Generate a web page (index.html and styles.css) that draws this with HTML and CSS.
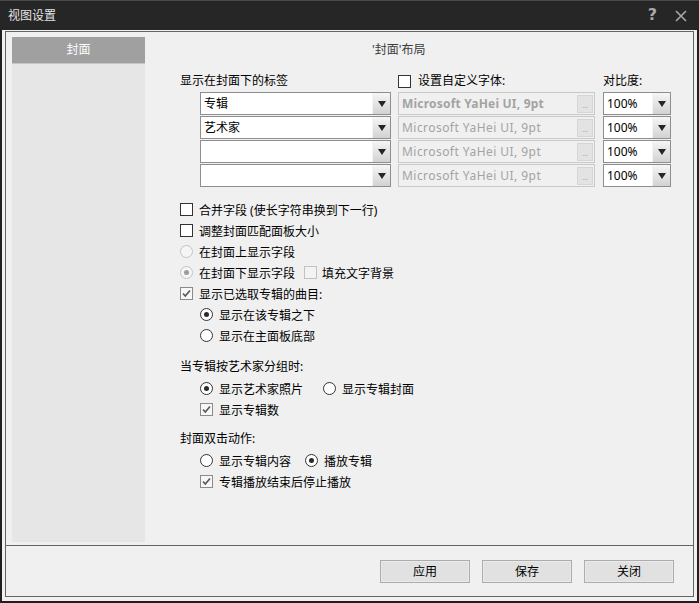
FILE: index.html
```html
<!DOCTYPE html>
<html lang="zh-CN">
<head>
<meta charset="utf-8">
<title>视图设置</title>
<link rel="stylesheet" href="styles.css">
</head>
<body>
<div class="window">
  <div class="titlebar">
    <span class="title">视图设置</span>
    <div class="title-btns">
      <span class="help">?</span>
      <svg class="close" width="12" height="12" viewBox="0 0 12 12"><path d="M1 1L11 11M11 1L1 11"/></svg>
    </div>
  </div>
  <div class="frame-wrap">
    <div class="frame">
      <div class="body">
        <aside class="sidebar">
          <div class="side-item active">封面</div>
        </aside>
        <main class="panel">
          <div class="panel-title">'封面'布局</div>
          <div class="fields">
            <div class="hdr">显示在封面下的标签</div>
            <div class="hdr hdr-check"><span class="cb"></span><span>设置自定义字体:</span></div>
            <div class="hdr">对比度:</div>

            <div class="combo label-combo"><span class="val">专辑</span><span class="dd"></span></div>
            <div class="combo font-combo"><span class="val bold">Microsoft YaHei UI, 9pt</span><span class="ell">...</span></div>
            <div class="combo pct-combo"><span class="val">100%</span><span class="dd"></span></div>

            <div class="combo label-combo"><span class="val">艺术家</span><span class="dd"></span></div>
            <div class="combo font-combo"><span class="val">Microsoft YaHei UI, 9pt</span><span class="ell">...</span></div>
            <div class="combo pct-combo"><span class="val">100%</span><span class="dd"></span></div>

            <div class="combo label-combo"><span class="val"></span><span class="dd"></span></div>
            <div class="combo font-combo"><span class="val">Microsoft YaHei UI, 9pt</span><span class="ell">...</span></div>
            <div class="combo pct-combo"><span class="val">100%</span><span class="dd"></span></div>

            <div class="combo label-combo"><span class="val"></span><span class="dd"></span></div>
            <div class="combo font-combo"><span class="val">Microsoft YaHei UI, 9pt</span><span class="ell">...</span></div>
            <div class="combo pct-combo"><span class="val">100%</span><span class="dd"></span></div>
          </div>

          <div class="options">
            <div class="opt"><span class="cb"></span><span>合并字段 (使长字符串换到下一行)</span></div>
            <div class="opt"><span class="cb"></span><span>调整封面匹配面板大小</span></div>
            <div class="opt"><span class="rb dis"></span><span>在封面上显示字段</span></div>
            <div class="opt"><span class="rb dis on"></span><span>在封面下显示字段</span><span class="cb dis gap-l"></span><span class="tight">填充文字背景</span></div>
            <div class="opt"><span class="cb on"><svg viewBox="0 0 11 11"><path d="M2 5.5L4.3 8L9 2.5"/></svg></span><span>显示已选取专辑的曲目:</span></div>
            <div class="opt indent"><span class="rb on"></span><span>显示在该专辑之下</span></div>
            <div class="opt indent"><span class="rb"></span><span>显示在主面板底部</span></div>

            <div class="section-label first">当专辑按艺术家分组时:</div>
            <div class="opt indent top4"><span class="rb on"></span><span>显示艺术家照片</span><span class="rb gap-xl"></span><span>显示专辑封面</span></div>
            <div class="opt indent"><span class="cb on"><svg viewBox="0 0 11 11"><path d="M2 5.5L4.3 8L9 2.5"/></svg></span><span>显示专辑数</span></div>

            <div class="section-label second">封面双击动作:</div>
            <div class="opt indent top4"><span class="rb"></span><span>显示专辑内容</span><span class="rb on gap-m"></span><span>播放专辑</span></div>
            <div class="opt indent"><span class="cb on"><svg viewBox="0 0 11 11"><path d="M2 5.5L4.3 8L9 2.5"/></svg></span><span>专辑播放结束后停止播放</span></div>
          </div>
        </main>
      </div>
      <div class="footer">
        <button class="btn">应用</button>
        <button class="btn">保存</button>
        <button class="btn">关闭</button>
      </div>
    </div>
  </div>
</div>
</body>
</html>
```

FILE: styles.css
```css
html, body {
  margin: 0;
  padding: 0;
  background: #1f1f1f;
}

body {
  font-family: "Noto Sans", "Noto Sans CJK SC", sans-serif;
  font-size: 12px;
  color: #000;
}

.window {
  width: 699px;
  height: 603px;
  display: flex;
  flex-direction: column;
  overflow: hidden;
}

.titlebar {
  height: 30px;
  flex: none;
  background: #262626;
  box-shadow: inset 0 1px 0 #4a4a4a;
  display: flex;
  align-items: center;
  justify-content: space-between;
  padding: 0 12px 0 8px;
  box-sizing: border-box;
}

.title {
  color: #e4e4e4;
  font-size: 12px;
  line-height: 16px;
  margin-top: 2px;
}

.title-btns {
  display: flex;
  align-items: center;
  gap: 18px;
}

.help {
  color: #a9a9a9;
  font-family: "DejaVu Sans", sans-serif;
  font-weight: bold;
  font-size: 16px;
  line-height: 16px;
}

.close {
  display: block;
  margin-top: 1px;
}

.close path {
  stroke: #a9a9a9;
  stroke-width: 1.6;
  fill: none;
}

.frame-wrap {
  flex: 1;
  background: #f0f0f0;
  border: 2px solid #1f1f1f;
  border-top: 0;
  padding: 1px 3px 4px 3px;
  display: flex;
}

.frame {
  flex: 1;
  border: 1px solid #646464;
  display: flex;
  flex-direction: column;
}

.body {
  height: 513px;
  box-sizing: border-box;
  padding: 5px 0 3px 6px;
  display: flex;
}

.sidebar {
  width: 133px;
  background: #e6e6e6;
  flex: none;
}

.side-item {
  height: 26px;
  line-height: 26px;
  text-align: center;
  color: #fff;
  font-size: 12px;
}

.side-item.active {
  background: #a0a0a0;
  border-bottom: 1px solid #c6c6c6;
}

.panel {
  flex: 1;
  padding: 5px 0 0 35px;
  display: flex;
  flex-direction: column;
}

.panel-title {
  line-height: 16px;
  height: 16px;
  color: #3c3c3c;
  padding-left: 192px;
}

.fields {
  margin-top: 15px;
  display: grid;
  grid-template-columns: 211px 198px 68px;
  grid-template-rows: 18px repeat(4, 23px);
  column-gap: 7px;
  row-gap: 1px;
}

.hdr {
  line-height: 16px;
  height: 16px;
  display: flex;
  align-items: center;
  white-space: nowrap;
}

.hdr-check {
  gap: 7px;
}

.combo {
  box-sizing: border-box;
  height: 23px;
  border: 1px solid #8e8e8e;
  background: #fff;
  display: flex;
  align-items: stretch;
}

.combo .val {
  flex: 1;
  line-height: 21px;
  padding-left: 3px;
  white-space: nowrap;
  overflow: hidden;
}

.label-combo {
  margin-left: 20px;
}

.font-combo {
  width: 197px;
  border-color: #c9c9c9;
  background: #f0f0f0;
  color: #a3a3a3;
  align-items: center;
  padding-right: 1px;
}

.font-combo .val {
  letter-spacing: 0.45px;
}

.font-combo .val.bold {
  font-weight: bold;
  letter-spacing: 0.2px;
}

.pct-combo .val {
  padding-left: 3px;
}

.ell {
  width: 16px;
  height: 18px;
  box-sizing: border-box;
  background: #e3e3e3;
  border: 1px solid #d6d6d6;
  color: #b2b2b2;
  font-size: 9px;
  line-height: 18px;
  text-align: center;
  letter-spacing: -0.5px;
}

.dd {
  width: 17px;
  flex: none;
  background: linear-gradient(#f6f6f6, #d2d2d2);
  border-left: 1px solid #f4f4f4;
  display: flex;
  align-items: center;
  justify-content: center;
}

.dd::after {
  content: "";
  width: 0;
  height: 0;
  border-left: 4.5px solid transparent;
  border-right: 4.5px solid transparent;
  border-top: 6px solid #252525;
  margin-top: 1px;
}

.options {
  margin-top: 12px;
  display: flex;
  flex-direction: column;
}

.opt {
  height: 21px;
  display: flex;
  align-items: center;
  gap: 6px;
  white-space: nowrap;
}

.opt.indent {
  padding-left: 20px;
}

.opt.top4 {
  margin-top: 3px;
}

.section-label {
  line-height: 16px;
  height: 16px;
}

.section-label.first {
  margin-top: 13px;
}

.section-label.second {
  margin-top: 11px;
}

.cb {
  width: 13px;
  height: 13px;
  box-sizing: border-box;
  border: 1px solid #333;
  background: #fff;
  flex: none;
  display: flex;
  align-items: center;
  justify-content: center;
}

.cb.dis {
  border-color: #c2c2c2;
  background: #f3f3f3;
}

.cb.on {
  border-color: #8a8a8a;
  background: #f7f7f7;
}

.cb svg {
  width: 11px;
  height: 11px;
  display: block;
}

.cb svg path {
  fill: none;
  stroke: #5a5a5a;
  stroke-width: 1.7;
}

.rb {
  width: 13px;
  height: 13px;
  box-sizing: border-box;
  border: 1px solid #333;
  border-radius: 50%;
  background: #fff;
  flex: none;
  display: flex;
  align-items: center;
  justify-content: center;
}

.rb.dis {
  border-color: #c4c4c4;
  background: #f5f5f5;
}

.rb.on::after {
  content: "";
  width: 5px;
  height: 5px;
  border-radius: 50%;
  background: #2a2a2a;
}

.rb.dis.on::after {
  background: #9c9c9c;
}

.gap-l {
  margin-left: 3px;
}

.tight {
  margin-left: -1px;
}

.gap-xl {
  margin-left: 14px;
}

.gap-m {
  margin-left: 8px;
}

.footer {
  flex: 1;
  border-top: 1px solid #646464;
  display: flex;
  justify-content: flex-end;
  align-items: flex-start;
  gap: 12px;
  padding: 14px 19px 0 0;
}

.btn {
  width: 90px;
  height: 23px;
  box-sizing: border-box;
  border: 1px solid #adadad;
  background: #e1e1e1;
  box-shadow: inset 0 0 0 1px #e9e9e9;
  font-family: "Noto Sans", "Noto Sans CJK SC", sans-serif;
  font-size: 12px;
  color: #000;
  padding: 0;
  line-height: 20px;
}
```
